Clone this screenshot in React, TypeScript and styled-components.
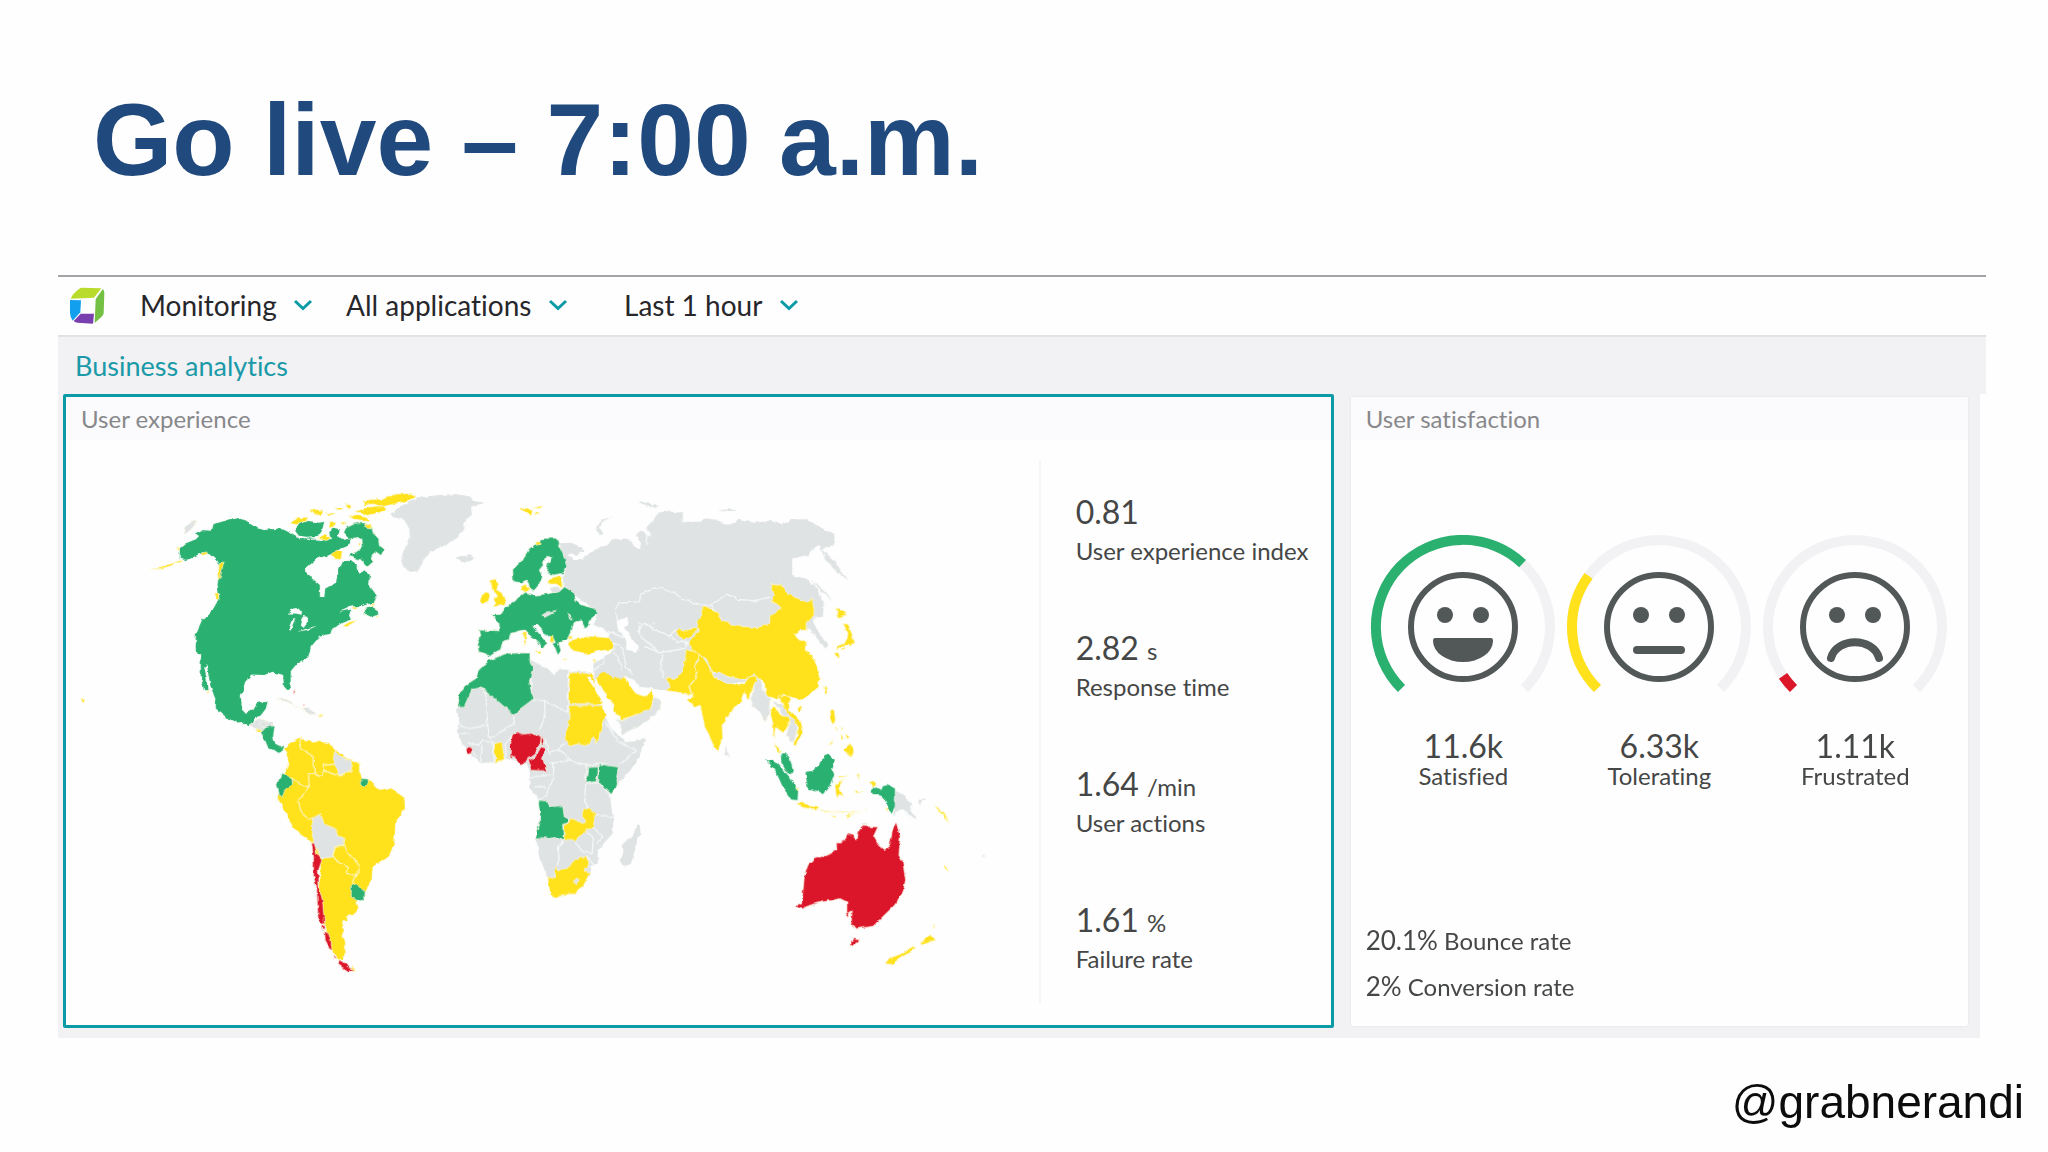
import React from 'react';
import styled, { createGlobalStyle } from 'styled-components';

const color = {
  teal: '#0b9ba7',
  green: '#2ab06f',
  yellow: '#ffe11c',
  red: '#dc172a',
  land: '#dfe3e3',
  track: '#f2f1f4',
  face: '#525758',
  text: '#454646',
  panelBg: '#f2f1f3',
};

const GlobalStyle = createGlobalStyle`
  *, *::before, *::after { box-sizing: border-box; }
  body {
    margin: 0;
    background: #fefefe;
    color: ${color.text};
    font-family: Lato, 'Open Sans', sans-serif;
    font-variant-ligatures: none;
  }
  h1, h2, h3, dl, dd, dt, p { margin: 0; font-weight: 400; }
`;

const Slide = styled.main`
  display: flex;
  flex-direction: column;
  padding: 82px 62px 0 58px;
`;

const Title = styled.h1`
  padding-left: 35px;
  margin-bottom: 77px;
  font: 700 102px/116px 'Liberation Sans', Arial, sans-serif;
  color: #20497d;
`;

const Toolbar = styled.header`
  display: flex;
  align-items: center;
  height: 62px;
  padding: 0 0 2px 10px;
  border-top: 2px solid #a5a3a8;
  border-bottom: 2px solid #e2e1e4;
`;

const LogoLink = styled.a`
  display: flex;
  width: 38px;
  margin-right: 34px;
`;

const Filter = styled.label<{ $gap: number }>`
  display: inline-flex;
  align-items: center;
  gap: 16px;
  margin-right: ${(p) => p.$gap}px;
`;

const Select = styled.select`
  appearance: none;
  border: 0;
  padding: 0;
  margin: 0;
  background: none;
  color: #27272b;
  font: 400 28px/34px Lato, sans-serif;
  font-variant-ligatures: none;
`;

const SectionTitle = styled.h2`
  padding-left: 17px;
  background: ${color.panelBg};
  color: #1a9aa8;
  font-size: 27px;
  line-height: 57px;
`;

const Panels = styled.div`
  display: flex;
  gap: 17px;
  margin-right: 6px;
  padding: 0 12px 10px 5px;
  background: ${color.panelBg};
`;

const Panel = styled.section<{ $grow: number; $selected?: boolean }>`
  display: flex;
  flex-direction: column;
  flex: ${(p) => p.$grow} 1 0;
  min-width: 0;
  background: #fefefe;
  border: ${(p) => (p.$selected ? `3px solid ${color.teal}` : '0')};
  border-radius: 2px;
  margin: ${(p) => (p.$selected ? '0' : '3px 0 2px')};
  box-shadow: ${(p) => (p.$selected ? 'none' : '0 0 2px #dcdbe0')};
`;

const PanelTitle = styled.h3`
  padding-left: 15px;
  background: #fbfbfd;
  color: #88888b;
  font-size: 24px;
  line-height: 43px;
`;

const Experience = styled.div`
  display: flex;
`;

const MapArea = styled.div`
  flex: 1;
  min-width: 0;
`;

const MapSvg = styled.svg`
  display: block;
  width: 100%;
`;

const Metrics = styled.dl`
  display: flex;
  flex-direction: column;
  gap: 67px;
  width: 292px;
  margin: 20px 0 22px;
  padding: 35px 0 0 35px;
  border-left: 2px solid #f6f5f8;
`;

const Metric = styled.div`
  display: flex;
  flex-direction: column-reverse;
  gap: 9px;
`;

const Value = styled.dd`
  font-size: 32px;
  line-height: 34px;
`;

const Unit = styled.span`
  font-size: 24px;
  line-height: 1;
`;

const Caption = styled.dt`
  font-size: 24px;
  line-height: 26px;
  white-space: nowrap;
`;

const Gauges = styled.dl`
  display: flex;
  justify-content: center;
  padding-top: 95px;
`;

const Gauge = styled.div`
  display: flex;
  flex-direction: column;
  align-items: center;
  flex: 0 1 196px;
`;

const GaugeSvg = styled.svg`
  display: block;
  width: 100%;
  margin-bottom: 34px;
`;

const Rates = styled.div`
  margin-top: auto;
  padding: 0 0 16px 15px;
  font-size: 24px;
  line-height: 46px;
`;

const RateNumber = styled.span`
  font-size: 26px;
  line-height: 1;
`;

const Handle = styled.footer`
  margin: 38px -38px 0 0;
  text-align: right;
  color: #0c0c0c;
  font: 400 46px/52px 'Liberation Sans', Arial, sans-serif;
`;

const Chevron = () => (
  <svg width="20" height="12" viewBox="0 0 20 12" fill="none" stroke={color.teal} strokeWidth="3" aria-hidden="true">
    <path d="M2 2 L10 9.5 L18 2" />
  </svg>
);

const Logo = () => (
  <svg width="38" height="38" viewBox="0 0 114 114" aria-hidden="true">
    <path d="M8 38 Q14 22 34 8 Q38 5 44 5 L100 7 L78 35 Z" fill="#b9dc2c" />
    <path d="M104 10 Q109 12 109 20 L107 82 Q106 88 100 93 L80 111 L83 40 Z" fill="#74c044" />
    <path d="M6 42 L39 43 L37 79 L14 104 Q7 96 6 80 Z" fill="#12a0ee" />
    <path d="M38 83 L78 83 L75 113 L28 110 Q20 109 17 105 Z" fill="#7a3fae" />
  </svg>
);

type Shape = { fill: string; d: string };
type Tile = { x: number; y: number; shapes: Shape[]; borders: string };

const { green: G, yellow: Y, red: R, land: L } = color;
const W = '#fefefe';

/* Each tile holds one part of the world, drawn at three units to the map unit. */
const tiles: Tile[] = [
  {
    x: 150,
    y: 480,
    shapes: [
      { fill: G, d: 'M92 205 L110 190 L140 178 L150 168 L138 160 L158 150 L185 152 L190 133 L215 126 L268 114 L300 127 L325 145 L345 150 L395 145 L425 160 L455 178 L480 172 L515 180 L545 177 L540 160 L553 143 L572 147 L565 168 L578 180 L600 176 L612 172 L600 195 L575 205 L550 222 L520 230 L495 240 L470 262 L472 285 L495 300 L512 315 L512 350 L525 350 L528 325 L560 308 L567 275 L582 242 L605 243 L625 258 L628 282 L648 270 L662 285 L660 315 L683 348 L675 365 L640 378 L600 380 L570 395 L605 388 L600 400 L608 418 L575 430 L545 448 L540 462 L510 470 L485 500 L478 530 L440 555 L425 572 L424 620 L415 630 L404 618 L402 585 L370 575 L345 585 L310 583 L288 605 L275 650 L278 685 L290 698 L312 690 L325 668 L355 665 L350 685 L335 705 L318 712 L312 728 L298 738 L285 728 L265 730 L230 710 L200 685 L200 660 L185 620 L178 585 L174 552 L165 560 L172 590 L175 630 L165 630 L155 590 L155 525 L140 515 L140 465 L160 420 L190 390 L210 355 L205 310 L215 260 L200 240 L180 222 L150 222 L110 243 L92 235 Z' },
      { fill: G, d: 'M437 155 L450 132 L475 122 L510 128 L525 125 L520 145 L505 168 L470 170 L445 166 Z' },
      { fill: G, d: 'M583 160 L595 138 L612 130 L645 128 L668 142 L672 160 L688 175 L690 195 L706 208 L695 226 L680 215 L668 225 L672 245 L655 260 L635 240 L615 235 L600 225 L622 215 L640 200 L638 180 L625 172 L600 178 Z' },
      { fill: G, d: 'M642 400 L650 382 L665 376 L687 388 L683 405 L665 411 Z' },
      { fill: L, d: 'M105 145 L125 127 L145 122 L135 142 L110 160 Z' },
      { fill: L, d: 'M300 738 L330 715 L372 728 L372 740 L345 746 L335 754 Z' },
      { fill: L, d: 'M380 655 L400 653 L425 664 L455 688 L430 672 L400 660 Z M455 685 L480 685 L502 702 L480 702 Z' },
      { fill: Y, d: 'M422 130 L445 112 L475 112 L470 122 L440 134 Z M508 172 L525 164 L542 172 L530 182 Z M548 224 L562 210 L580 216 L575 234 L560 238 Z M2 270 L60 252 L98 240 L96 245 L50 262 Z M80 206 L92 204 L90 212 Z M155 220 L172 215 L176 221 L160 226 Z M210 248 L226 246 L220 262 L214 290 L206 300 Z M195 340 L206 338 L210 360 L198 356 Z M580 438 L600 426 L628 420 L605 432 L588 441 Z M608 380 L626 380 L620 385 Z M660 376 L676 368 L674 376 Z M676 408 L686 410 L680 416 Z M318 744 L338 750 L330 756 Z M172 630 L180 634 L176 642 Z M508 704 L524 706 L512 711 Z' },
      { fill: Y, d: 'M480 92 L500 88 L522 92 L518 106 L498 104 Z M530 98 L560 100 L540 106 Z M560 84 L578 82 L580 88 L564 90 Z M590 72 L606 76 L604 86 L594 82 Z M540 128 L560 126 L556 142 L544 140 Z M572 126 L594 128 L582 134 Z M600 106 L630 104 L650 112 L664 122 L640 124 L612 120 Z M618 96 L645 84 L668 80 L700 76 L712 88 L690 98 L655 106 L640 98 Z M640 64 L668 58 L700 58 L715 50 L740 42 L790 40 L800 52 L770 64 L735 72 L700 80 L672 72 L645 76 Z M646 132 L666 136 L664 144 L650 140 Z M624 188 L636 190 L630 198 Z' },
      { fill: W, d: 'M416 400 L430 386 L448 382 L458 394 L458 404 L440 400 Z M418 450 L426 424 L440 412 L432 430 L424 452 Z M455 436 L462 408 L474 410 L480 424 L468 436 L464 444 Z M446 455 L470 446 L504 436 L480 448 Z' },
      { fill: R, d: 'M432 632 L438 632 L436 644 Z M462 672 L467 674 L463 678 Z' },
    ],
    borders: 'M440 170 L480 178 L515 176',
  },
  {
    x: 260,
    y: 720,
    shapes: [
      { fill: G, d: 'M5 35 L20 20 L46 15 L42 50 L50 75 L65 82 L75 76 L70 92 L55 98 L40 88 L28 85 L20 65 Z' },
      { fill: Y, d: 'M74 84 L84 78 L90 70 L105 63 L128 50 L140 62 L165 64 L185 66 L208 68 L228 90 L300 126 L300 155 L312 175 L330 180 L360 208 L400 208 L435 232 L437 262 L408 310 L405 370 L390 405 L340 440 L337 480 L318 515 L292 545 L298 565 L285 582 L262 588 L265 602 L248 605 L255 625 L248 650 L258 665 L258 690 L250 718 L235 712 L215 685 L210 650 L192 610 L182 510 L185 430 L160 370 L105 325 L55 232 L60 215 L75 165 L87 130 L86 100 Z M275 740 L292 748 L280 752 Z' },
      { fill: L, d: 'M228 92 L250 115 L275 120 L280 148 L240 165 L232 140 L220 120 Z' },
      { fill: W, d: 'M255 95 L290 118 L306 130 L290 130 L274 117 L250 112 Z' },
      { fill: G, d: 'M53 190 L68 160 L98 172 L100 190 L77 212 L68 230 L60 222 Z' },
      { fill: L, d: 'M160 297 L184 280 L195 310 L228 325 L235 345 L257 355 L254 378 L228 380 L220 410 L185 415 L175 390 L160 365 Z' },
      { fill: G, d: 'M276 490 L290 492 L318 515 L316 540 L295 541 L276 530 Z M303 185 L310 175 L324 176 L328 186 L318 198 L306 196 Z' },
      { fill: R, d: 'M157 370 L165 368 L173 400 L188 420 L178 450 L180 505 L190 540 L196 610 L186 612 L176 590 L175 560 L172 500 L163 470 L163 410 Z M186 618 L192 616 L196 628 L188 630 Z M196 632 L208 640 L216 662 L218 692 L208 682 L198 662 Z M222 702 L232 712 L226 714 Z M236 718 L256 726 L268 742 L286 748 L270 754 L250 742 L236 732 Z' },
      { fill: L, d: 'M0 10 L12 4 L30 8 L26 16 L8 22 Z' },
    ],
    borders: 'M128 50 L122 85 L165 110 L165 160 L185 170 L198 150 L192 136 L225 132 M165 160 L148 160 L150 200 L125 195 L98 174 M148 200 L140 215 L118 240 L125 275 L145 295 L160 297 M200 150 L215 160 L240 166 L280 150 M220 410 L228 380 L257 378 L268 402 L292 420 L300 450 L288 465 L264 460 L268 442 L240 428 L222 410 M300 450 L284 475 L278 490',
  },
  {
    x: 440,
    y: 680,
    shapes: [
      { fill: L, d: 'M52 78 L60 130 L55 160 L65 185 L85 215 L125 250 L165 245 L200 235 L228 240 L240 252 L262 250 L272 275 L270 320 L300 360 L300 420 L290 470 L300 530 L325 592 L345 600 L450 590 L452 560 L475 550 L475 510 L520 460 L522 420 L516 380 L512 342 L532 318 L590 250 L618 176 L580 184 L555 186 L540 165 L515 145 L498 110 L470 40 L455 -25 L388 -27 L362 -35 L345 -15 L325 -35 L275 -60 L200 -82 L100 0 Z' },
      { fill: L, d: 'M600 430 L603 455 L588 505 L575 550 L555 560 L543 545 L552 515 L550 490 L575 470 L588 448 Z' },
      { fill: G, d: 'M118 -30 L150 -60 L200 -80 L272 -82 L272 -55 L280 -35 L270 5 L275 30 L284 55 L240 88 L235 100 L222 104 L130 22 L98 28 L75 78 L52 79 L60 40 L78 15 L110 -5 Z' },
      { fill: Y, d: 'M390 -24 L430 -20 L457 -22 L465 8 L480 40 L492 72 L390 70 Z M391 76 L492 76 L500 108 L490 125 L488 150 L470 190 L464 172 L454 178 L452 196 L420 190 L390 198 L375 165 L387 135 Z M165 190 L188 185 L192 215 L195 238 L170 246 L167 220 Z' },
      { fill: R, d: 'M215 178 L220 162 L232 157 L250 165 L275 162 L298 165 L308 172 L300 195 L285 222 L265 236 L258 248 L240 252 L230 235 L212 228 Z M305 200 L318 205 L310 235 L322 272 L275 270 L276 255 L266 240 L288 230 L298 212 Z M304 172 L312 175 L314 192 L306 190 Z M80 208 L92 196 L100 208 L95 224 L84 218 Z' },
      { fill: G, d: 'M448 262 L476 260 L476 280 L470 304 L438 308 L446 285 Z M480 250 L500 256 L537 260 L532 290 L534 315 L516 342 L478 306 Z M297 360 L325 362 L332 380 L350 378 L370 375 L375 412 L386 414 L384 428 L370 432 L372 478 L345 474 L290 472 L292 448 L304 425 Z' },
      { fill: Y, d: 'M374 434 L386 430 L392 412 L430 430 L440 425 L426 400 L430 390 L448 385 L468 400 L462 440 L432 455 L408 480 L374 476 Z M325 592 L345 592 L350 555 L358 572 L382 565 L400 545 L420 532 L442 528 L446 560 L434 566 L440 578 L452 575 L435 612 L405 640 L360 645 L342 653 L332 635 Z' },
      { fill: L, d: 'M402 602 L412 590 L420 598 L412 610 Z' },
      { fill: L, d: 'M520 118 L545 120 L600 100 L640 68 L642 46 L668 65 L656 95 L605 135 L550 162 L540 150 Z' },
      { fill: Y, d: 'M468 -5 L478 -15 L490 -30 L530 -20 L560 -8 L575 20 L592 42 L620 48 L640 28 L638 65 L636 84 L602 100 L545 118 L528 100 L520 72 L490 28 Z' },
      { fill: W, d: 'M440 -10 L452 -8 L470 20 L500 65 L525 110 L548 150 L540 158 L515 142 L500 112 L486 66 L462 20 Z' },
    ],
    borders: 'M98 28 L130 22 L140 45 L145 135 L92 145 L55 130 M145 135 L152 175 L185 155 L225 130 L222 104 M275 -5 L275 60 L315 62 L385 95 L388 -25 M315 62 L318 110 L300 150 M318 175 L330 220 L355 205 L378 190 M355 205 L395 240 L440 255 L500 248 M345 245 L340 300 L320 345 L300 358 M330 250 L395 240 M440 255 L440 310 L435 350 L445 385 M440 310 L478 308 M498 125 L540 185 L590 210 L540 255 M468 400 L520 412 M462 440 L490 470 L470 490 M372 478 L358 500 L358 555 M408 480 L430 515 L458 520 L462 470 L440 455 M270 290 L335 285 M285 320 L320 320 M60 158 L90 160 M85 185 L118 195 L130 180 L165 190 M100 212 L110 230 M162 190 L165 245 M200 235 L198 190 L222 160 M128 195 L125 250 M440 528 L465 555 M518 350 L478 306',
  },
  {
    x: 640,
    y: 490,
    shapes: [
      { fill: L, d: 'M-240 160 L-205 158 L-172 172 L-168 185 L-190 195 L-205 190 L-215 195 L-200 210 L-170 210 L-160 195 L-130 178 L-95 165 L-80 145 L-55 150 L-30 145 L-20 165 L0 178 L8 165 L-10 135 L0 120 L20 135 L38 140 L20 115 L50 80 L70 62 L130 68 L130 95 L180 95 L200 85 L235 90 L245 100 L270 104 L300 90 L345 98 L390 92 L430 102 L460 88 L505 88 L530 105 L585 135 L582 170 L560 170 L548 180 L565 195 L590 215 L605 245 L625 272 L590 245 L558 210 L540 165 L528 170 L505 195 L458 205 L458 255 L500 265 L535 295 L553 340 L550 380 L530 382 L520 395 L540 430 L565 465 L555 477 L535 445 L510 415 L480 420 L380 500 L350 590 L300 570 L200 540 L80 602 L40 595 L0 590 L-15 570 L-45 555 L-60 570 L-110 545 L-138 575 L-138 520 L-75 480 L-75 460 L-95 440 L-140 412 L-125 365 L-195 315 L-225 290 L-230 260 L-218 230 Z' },
      { fill: L, d: 'M-130 120 L-115 90 L-80 78 L-105 92 L-118 112 L-110 130 L-122 132 Z M-8 30 L20 38 L60 48 L50 54 L10 42 Z M236 60 L270 58 L300 62 L250 64 Z M515 265 L545 292 L580 335 L560 318 L530 285 Z M258 765 L268 785 L268 800 L258 792 Z M-270 290 L-250 290 L-230 300 L-240 310 L-262 306 Z' },
      { fill: W, d: 'M-68 390 L-40 384 L-32 400 L-46 412 L-22 445 L-5 468 L-8 485 L-36 480 L-40 452 L-66 412 Z M40 398 L45 395 L42 406 Z' },
      { fill: Y, d: 'M392 283 L425 285 L432 298 L450 315 L500 335 L518 325 L522 350 L527 375 L500 400 L500 425 L488 415 L465 435 L480 450 L502 452 L495 472 L520 500 L540 545 L538 590 L500 622 L480 630 L452 620 L430 612 L415 628 L380 618 L375 580 L345 550 L318 568 L290 568 L220 545 L200 505 L160 482 L145 460 L172 432 L180 420 L172 395 L190 375 L188 352 L205 350 L235 368 L245 390 L290 408 L355 412 L390 400 L395 380 L425 350 L395 335 L405 315 Z M110 424 L118 416 L135 420 L178 414 L160 436 L135 450 L118 438 Z' },
      { fill: Y, d: 'M78 562 L105 568 L130 545 L140 482 L165 480 L180 495 L165 530 L172 560 L148 588 L158 615 L140 610 L84 602 L90 585 Z' },
      { fill: Y, d: 'M180 492 L190 500 L212 535 L225 562 L295 585 L312 582 L330 560 L350 556 L352 570 L335 600 L328 628 L318 625 L316 604 L305 632 L280 660 L248 705 L250 745 L235 782 L225 772 L195 705 L182 645 L165 652 L145 628 L160 618 L150 588 L174 560 L166 530 L176 515 Z' },
      { fill: L, d: 'M218 548 L238 545 L270 562 L318 568 L310 580 L265 580 L225 562 Z M345 580 L362 562 L372 600 L392 630 L388 672 L375 697 L360 665 L342 650 L335 625 Z M400 632 L425 640 L440 660 L470 695 L474 730 L458 758 L440 735 L450 695 L425 668 Z' },
      { fill: Y, d: 'M390 660 L400 648 L425 672 L450 682 L445 708 L432 728 L408 712 L405 750 L424 792 L412 775 L402 735 L400 700 Z M415 618 L440 614 L455 626 L446 645 L448 660 L480 690 L490 730 L465 768 L460 756 L476 735 L474 705 L440 662 L430 640 Z M474 655 L485 645 L488 660 L478 668 Z M552 588 L560 585 L563 605 L558 615 Z M588 352 L620 365 L618 378 L598 385 Z M610 400 L625 402 L635 425 L646 458 L630 468 L618 465 L600 472 L592 478 L592 468 L612 460 L624 440 L618 415 Z M584 486 L598 484 L600 505 L590 500 Z M606 474 L620 472 L608 482 Z M572 662 L584 660 L588 690 L580 706 L574 692 Z M586 712 L596 716 L592 722 Z M605 708 L612 718 L606 720 Z M600 735 L612 740 L608 750 Z M618 728 L630 742 L622 746 Z M612 782 L628 765 L640 770 L638 798 L625 795 Z M565 770 L580 745 L575 760 Z' },
    ],
    borders: 'M-75 360 L-60 340 L0 335 L5 312 L55 292 L105 308 L135 330 L190 345 L215 345 L262 312 L295 328 L345 332 L395 320 M-75 365 L-65 388 M-5 425 L15 398 L45 420 L90 435 L115 455 L145 458 M0 395 L0 435 L60 488 L135 475 L145 455 M70 495 L62 525 L72 560 M0 475 L-5 480 M15 468 L60 488 M-130 415 L-75 430 L-45 445 M-75 460 L-50 475 L-40 530 L-20 555 M-75 485 L-55 520 L-55 540 M-110 490 L-105 520 L-138 540 M215 345 L245 388 M110 418 L85 440 M20 115 L24 165',
  },
  {
    x: 440,
    y: 480,
    shapes: [
      { fill: L, d: 'M-145 100 L-110 75 L-60 52 L0 45 L50 42 L95 50 L100 62 L135 68 L95 80 L98 100 L70 130 L80 140 L50 175 L20 195 L-30 215 L-50 245 L-66 278 L-90 272 L-108 260 L-115 238 L-108 215 L-88 170 L-90 145 L-105 120 L-145 108 Z M48 230 L62 228 L78 228 L90 222 L108 232 L90 245 L65 243 Z' },
      { fill: W, d: 'M395 425 L425 422 L440 440 L462 435 L490 445 L512 462 L505 472 L450 466 L400 478 L385 470 Z' },
      { fill: G, d: 'M220 268 L245 245 L270 205 L295 188 L315 175 L355 174 L358 195 L372 225 L382 255 L370 280 L335 286 L320 275 L325 250 L337 232 L320 228 L312 255 L300 270 L310 290 L298 315 L282 335 L270 320 L262 300 L245 308 L222 305 Z' },
      { fill: G, d: 'M155 405 L185 402 L200 380 L225 365 L240 348 L256 336 L290 345 L330 340 L360 335 L375 320 L400 335 L410 360 L430 375 L468 385 L475 400 L450 420 L452 435 L436 442 L425 422 L405 425 L398 450 L385 478 L358 488 L366 515 L355 524 L342 490 L325 470 L295 436 L282 438 L300 460 L324 490 L312 508 L300 490 L270 465 L255 450 L240 452 L213 460 L210 475 L190 485 L185 505 L150 530 L138 520 L118 515 L115 495 L122 470 L118 450 L182 452 L178 425 Z' },
      { fill: W, d: 'M280 440 L290 434 L330 470 L345 478 L350 490 L338 486 L300 460 Z' },
      { fill: L, d: 'M308 405 L325 395 L348 392 L335 402 L315 412 Z M386 400 L394 405 L398 420 L390 412 Z' },
      { fill: Y, d: 'M388 482 L415 475 L450 468 L505 473 L523 488 L522 508 L480 512 L445 525 L405 515 L392 500 Z M384 472 L400 470 L396 478 Z M152 302 L165 296 L178 312 L172 325 L190 345 L202 362 L195 376 L160 380 L170 368 L162 355 L174 348 L158 322 Z M122 365 L125 348 L140 335 L152 345 L148 362 L130 372 Z M245 320 L258 312 L270 325 L260 336 L248 334 Z M328 300 L345 290 L366 290 L370 325 L352 312 L330 312 Z M252 460 L262 456 L260 480 L252 476 Z M252 480 L262 482 L258 500 Z M285 512 L305 510 L302 520 Z M330 470 L340 465 L344 485 L334 488 Z M288 188 L300 182 L302 192 L292 196 Z M372 535 L385 538 L374 540 Z M460 542 L470 540 L464 550 Z' },
      { fill: Y, d: 'M242 88 L262 84 L280 88 L276 108 L262 100 L256 94 Z M278 80 L312 78 L300 86 Z M288 96 L302 102 L290 106 Z' },
    ],
    borders: '',
  },
  {
    x: 740,
    y: 720,
    shapes: [
      { fill: G, d: 'M80 118 L100 116 L125 142 L150 170 L176 208 L174 240 L155 238 L130 200 L108 152 Z M124 105 L138 100 L150 112 L160 150 L155 162 L140 152 L126 128 Z M198 158 L215 155 L240 130 L255 105 L268 100 L283 120 L275 145 L284 165 L272 195 L250 222 L235 212 L205 205 Z M395 208 L410 202 L425 210 L430 198 L445 194 L466 205 L466 262 L456 280 L445 270 L442 245 L425 225 L400 225 Z' },
      { fill: L, d: 'M468 210 L495 228 L515 255 L512 270 L532 298 L505 285 L490 265 L478 270 L460 285 L466 262 Z M534 244 L560 232 L545 252 Z M728 404 L736 404 L732 412 Z' },
      { fill: Y, d: 'M170 248 L190 248 L215 258 L238 260 L228 270 L185 260 Z M240 264 L290 280 L270 276 L245 270 Z M280 272 L320 274 L368 272 L320 278 Z M270 286 L290 288 L288 293 Z M318 290 L350 274 L325 293 Z M285 185 L292 190 L312 178 L300 198 L310 225 L316 232 L300 222 L292 236 L288 212 Z M290 168 L330 168 L300 174 Z M355 160 L360 162 L358 182 Z M388 186 L400 182 L410 194 L400 202 Z M345 212 L378 214 L350 218 Z M380 262 L386 268 L380 270 Z M438 266 L446 266 L442 272 Z M168 200 L178 206 L174 210 Z M106 70 L118 84 L124 102 L112 92 Z M312 90 L328 72 L340 78 L338 104 L325 100 Z M584 256 L595 262 L622 292 L632 310 L600 275 Z M612 432 L620 440 L624 454 L616 446 Z' },
      { fill: R, d: 'M170 560 L178 550 L186 552 L195 465 L205 435 L225 415 L270 402 L292 388 L290 368 L305 368 L325 340 L340 345 L352 356 L358 330 L370 318 L415 320 L402 348 L415 370 L435 388 L450 375 L460 325 L470 305 L482 350 L478 405 L490 425 L498 480 L490 515 L465 555 L400 618 L370 622 L352 625 L334 612 L338 570 L322 580 L322 545 L302 535 L250 545 L200 558 L185 566 Z M340 652 L360 656 L350 672 L330 680 Z M318 582 L330 578 L324 592 Z' },
      { fill: L, d: 'M366 308 L385 306 L380 314 L370 314 Z' },
      { fill: Y, d: 'M436 730 L450 712 L480 702 L520 678 L528 684 L500 702 L455 732 Z M545 668 L560 650 L576 642 L586 656 L565 668 L548 674 Z M580 612 L586 616 L578 628 Z' },
    ],
    borders: '',
  },
];

const WorldMap = () => (
  <MapSvg viewBox="67 440 972 585" role="img" aria-label="World map">
    <defs>
      <filter id="coast" x="-5%" y="-5%" width="110%" height="110%">
        <feTurbulence type="fractalNoise" baseFrequency="0.16" numOctaves="2" seed="4" result="noise" />
        <feDisplacementMap in="SourceGraphic" in2="noise" scale="4" xChannelSelector="R" yChannelSelector="G" />
      </filter>
    </defs>
    <g filter="url(#coast)">
      {tiles.map((tile) => (
        <g key={`${tile.x}-${tile.y}`} transform={`translate(${tile.x} ${tile.y}) scale(0.33333)`}>
          {tile.shapes.slice(0, 2).map((s, i) => (
            <path key={i} d={s.d} fill={s.fill} />
          ))}
          {tile.x !== 260 && <path d={tile.borders} fill="none" stroke="#f7f9f9" strokeWidth="4" />}
          {tile.shapes.slice(2).map((s, i) => (
            <path key={i} d={s.d} fill={s.fill} stroke={s.fill === W ? 'none' : '#fdfbe8'} strokeWidth="2" />
          ))}
          {tile.x === 260 && <path d={tile.borders} fill="none" stroke="#fff6b8" strokeWidth="4" />}
        </g>
      ))}
      <circle cx="84" cy="700" r="1.5" fill={Y} />
    </g>
  </MapSvg>
);

const point = (deg: number, r: number) => {
  const a = (deg * Math.PI) / 180;
  return `${(r * Math.cos(a)).toFixed(2)} ${(r * Math.sin(a)).toFixed(2)}`;
};

const arc = (from: number, to: number) =>
  `M${point(from, 87)} A87 87 0 ${to - from > 180 ? 1 : 0} 1 ${point(to, 87)}`;

const mouths = {
  happy: <path d="M-28 11 H28 Q30 11 30 14 A30 21 0 0 1 -30 14 Q-30 11 -28 11 Z" fill={color.face} />,
  neutral: <path d="M-22 23 H22" stroke={color.face} strokeWidth="8" strokeLinecap="round" />,
  sad: <path d="M-24 31 C-18 10 18 10 24 31" fill="none" stroke={color.face} strokeWidth="8" strokeLinecap="round" />,
};

type Mood = keyof typeof mouths;

const MoodGauge = ({ mood, share, tint }: { mood: Mood; share: number; tint: string }) => (
  <GaugeSvg viewBox="-98 -92 196 160" aria-hidden="true">
    <path d={arc(135, 405)} fill="none" stroke={color.track} strokeWidth="10" />
    <path d={arc(135, 135 + 270 * share)} fill="none" stroke={tint} strokeWidth="10" />
    <circle r="52" fill="none" stroke={color.face} strokeWidth="6" />
    <circle cx="-18" cy="-12" r="8" fill={color.face} />
    <circle cx="18" cy="-12" r="8" fill={color.face} />
    {mouths[mood]}
  </GaugeSvg>
);

const filters = [
  { label: 'Monitoring', name: 'View', gap: 33 },
  { label: 'All applications', name: 'Applications', gap: 56 },
  { label: 'Last 1 hour', name: 'Timeframe', gap: 0 },
];

const metrics = [
  { value: '0.81', unit: '', label: 'User experience index' },
  { value: '2.82', unit: 's', label: 'Response time' },
  { value: '1.64', unit: '/min', label: 'User actions' },
  { value: '1.61', unit: '%', label: 'Failure rate' },
];

const moods: { mood: Mood; share: number; tint: string; value: string; label: string }[] = [
  { mood: 'happy', share: 0.66, tint: G, value: '11.6k', label: 'Satisfied' },
  { mood: 'neutral', share: 0.3, tint: Y, value: '6.33k', label: 'Tolerating' },
  { mood: 'sad', share: 0.04, tint: R, value: '1.11k', label: 'Frustrated' },
];

const rates = [
  { value: '20.1%', label: 'Bounce rate' },
  { value: '2%', label: 'Conversion rate' },
];

export default function App() {
  return (
    <>
      <GlobalStyle />
      <Slide>
        <Title>Go live – 7:00 a.m.</Title>
        <Toolbar>
          <LogoLink href="#" aria-label="Home">
            <Logo />
          </LogoLink>
          {filters.map((f) => (
            <Filter key={f.name} $gap={f.gap}>
              <Select aria-label={f.name}>
                <option>{f.label}</option>
              </Select>
              <Chevron />
            </Filter>
          ))}
        </Toolbar>
        <SectionTitle>Business analytics</SectionTitle>
        <Panels>
          <Panel $grow={1264} $selected>
            <PanelTitle>User experience</PanelTitle>
            <Experience>
              <MapArea>
                <WorldMap />
              </MapArea>
              <Metrics>
                {metrics.map((m) => (
                  <Metric key={m.label}>
                    <Caption>{m.label}</Caption>
                    <Value>
                      {m.value} {m.unit && <Unit>{m.unit}</Unit>}
                    </Value>
                  </Metric>
                ))}
              </Metrics>
            </Experience>
          </Panel>
          <Panel $grow={617}>
            <PanelTitle>User satisfaction</PanelTitle>
            <Gauges>
              {moods.map((m) => (
                <Gauge key={m.mood}>
                  <MoodGauge mood={m.mood} share={m.share} tint={m.tint} />
                  <Value>{m.value}</Value>
                  <Caption>{m.label}</Caption>
                </Gauge>
              ))}
            </Gauges>
            <Rates>
              {rates.map((r) => (
                <p key={r.label}>
                  <RateNumber>{r.value}</RateNumber> {r.label}
                </p>
              ))}
            </Rates>
          </Panel>
        </Panels>
        <Handle>@grabnerandi</Handle>
      </Slide>
    </>
  );
}
